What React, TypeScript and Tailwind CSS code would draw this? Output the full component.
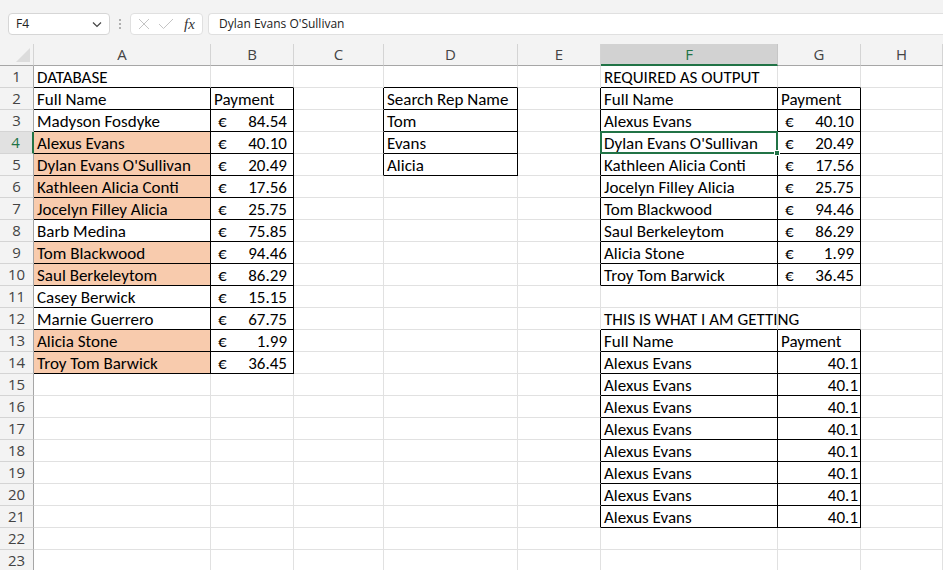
import React from 'react';

type Cell = { t: string; kind?: 'text' | 'eur' | 'num' };

const COLS = ['A', 'B', 'C', 'D', 'E', 'F', 'G', 'H'];
const ROWS = 23;

const database: [string, string][] = [
  ['Madyson Fosdyke', '84.54'],
  ['Alexus Evans', '40.10'],
  ['Dylan Evans O\'Sullivan', '20.49'],
  ['Kathleen Alicia Conti', '17.56'],
  ['Jocelyn Filley Alicia', '25.75'],
  ['Barb Medina', '75.85'],
  ['Tom Blackwood', '94.46'],
  ['Saul Berkeleytom', '86.29'],
  ['Casey Berwick', '15.15'],
  ['Marnie Guerrero', '67.75'],
  ['Alicia Stone', '1.99'],
  ['Troy Tom Barwick', '36.45'],
];

const required: [string, string][] = [
  ['Alexus Evans', '40.10'],
  ['Dylan Evans O\'Sullivan', '20.49'],
  ['Kathleen Alicia Conti', '17.56'],
  ['Jocelyn Filley Alicia', '25.75'],
  ['Tom Blackwood', '94.46'],
  ['Saul Berkeleytom', '86.29'],
  ['Alicia Stone', '1.99'],
  ['Troy Tom Barwick', '36.45'],
];

const highlighted = [4, 5, 6, 7, 9, 10, 13, 14];

// sheet contents, key = "row:col" (col 0 = A)
const sheet: Record<string, Cell> = {};
const put = (r: number, c: number, cell: Cell) => (sheet[`${r}:${c}`] = cell);

put(1, 0, { t: 'DATABASE' });
put(2, 0, { t: 'Full Name' });
put(2, 1, { t: 'Payment' });
database.forEach(([n, p], i) => {
  put(3 + i, 0, { t: n });
  put(3 + i, 1, { t: p, kind: 'eur' });
});

put(2, 3, { t: 'Search Rep Name' });
put(3, 3, { t: 'Tom' });
put(4, 3, { t: 'Evans' });
put(5, 3, { t: 'Alicia' });

put(1, 5, { t: 'REQUIRED AS OUTPUT' });
put(2, 5, { t: 'Full Name' });
put(2, 6, { t: 'Payment' });
required.forEach(([n, p], i) => {
  put(3 + i, 5, { t: n });
  put(3 + i, 6, { t: p, kind: 'eur' });
});

put(12, 5, { t: 'THIS IS WHAT I AM GETTING' });
put(13, 5, { t: 'Full Name' });
put(13, 6, { t: 'Payment' });
for (let r = 14; r <= 21; r++) {
  put(r, 5, { t: 'Alexus Evans' });
  put(r, 6, { t: '40.1', kind: 'num' });
}

const boxed = (r: number, c: number) =>
  (c >= 0 && c <= 1 && r >= 2 && r <= 14) ||
  (c === 3 && r >= 2 && r <= 5) ||
  (c >= 5 && c <= 6 && r >= 2 && r <= 10) ||
  (c >= 5 && c <= 6 && r >= 13 && r <= 21);

const cellFont = { fontFamily: 'Carlito, Calibri, Lato, "Liberation Sans", sans-serif' };

const FormulaBar: React.FC = () => (
  <div className="h-[44px] bg-[#f3f3f3] flex items-start pt-[13px] pl-[8px] gap-0">
    <div className="w-[102px] h-[22px] bg-white border border-[#d6d6d6] rounded-[4px] flex items-center justify-between pl-[7px] pr-[6px] text-[12px] text-[#222]">
      <span>F4</span>
      <svg width="12" height="12" viewBox="0 0 12 12" fill="none" stroke="#444" strokeWidth="1.2">
        <path d="M2 4.5 L6 8.5 L10 4.5" />
      </svg>
    </div>
    <div className="w-[20px] h-[22px] flex flex-col items-center justify-center gap-[2px]">
      <span className="w-[2px] h-[2px] bg-[#9a9a9a] rounded-full" />
      <span className="w-[2px] h-[2px] bg-[#9a9a9a] rounded-full" />
      <span className="w-[2px] h-[2px] bg-[#9a9a9a] rounded-full" />
    </div>
    <div className="w-[73px] h-[22px] bg-white border border-[#e0e0e0] rounded-[4px] flex items-center pl-[7px] gap-[8px]">
      <svg width="12" height="12" viewBox="0 0 12 12" fill="none" stroke="#c4c4c4" strokeWidth="1">
        <path d="M1 1 L11 11 M11 1 L1 11" />
      </svg>
      <svg width="16" height="12" viewBox="0 0 16 12" fill="none" stroke="#c4c4c4" strokeWidth="1">
        <path d="M1 6 L5.5 10.5 L15 1" />
      </svg>
      <span className="text-[15px] italic text-[#333] leading-none ml-[2px]" style={{ fontFamily: '"Liberation Serif", serif' }}>
        fx
      </span>
    </div>
    <div className="flex-1 ml-[5px] h-[22px] bg-white border border-[#e0e0e0] border-r-0 rounded-l-[4px] flex items-center pl-[10px] text-[12px] text-[#222]">
      Dylan Evans O'Sullivan
    </div>
  </div>
);

const App: React.FC = () => {
  return (
    <div className="w-[943px] h-[570px] overflow-hidden bg-white" style={{ fontFamily: '"Open Sans", "Noto Sans", sans-serif' }}>
      <FormulaBar />
      <div className="grid grid-cols-[34px_177px_83px_90px_134px_83px_177px_83px_1fr]">
        {/* column header row */}
        <div className="h-[22px] bg-[#f3f3f3] border-r border-b border-r-[#d4d4d4] border-b-[#a6a6a6] relative">
          <svg className="absolute right-[3px] bottom-[3px]" width="14" height="14" viewBox="0 0 14 14">
            <path d="M14 0 L14 14 L0 14 Z" fill="#dcdcdc" />
          </svg>
        </div>
        {COLS.map((c) =>
          c === 'F' ? (
            <div
              key={c}
              className="h-[22px] bg-[#d2d2d2] border-r border-r-[#c6c6c6] border-b-2 border-b-[#217346] flex items-center justify-center text-[15px] text-[#217346]"
            >
              {c}
            </div>
          ) : (
            <div
              key={c}
              className="h-[22px] bg-[#f3f3f3] border-r border-b border-r-[#d4d4d4] border-b-[#a6a6a6] flex items-center justify-center text-[15px] text-[#444]"
            >
              {c}
            </div>
          )
        )}

        {Array.from({ length: ROWS }, (_, i) => i + 1).map((r) => (
          <React.Fragment key={r}>
            {r === 4 ? (
              <div className="h-[22px] bg-[#e1e1e1] border-r-2 border-b border-r-[#217346] border-b-[#d4d4d4] flex items-center justify-center text-[15px] text-[#217346] pr-[1px]">
                {r}
              </div>
            ) : (
              <div className="h-[22px] bg-[#f3f3f3] border-r border-b border-r-[#a6a6a6] border-b-[#d4d4d4] flex items-center justify-center text-[15px] text-[#444]">
                {r}
              </div>
            )}
            {COLS.map((_, c) => {
              const cell = sheet[`${r}:${c}`];
              const rightBlack = boxed(r, c) || boxed(r, c + 1);
              const bottomBlack = boxed(r, c) || boxed(r + 1, c);
              const fill = c === 0 && highlighted.includes(r);
              const selected = r === 4 && c === 5;
              return (
                <div
                  key={c}
                  style={cellFont}
                  className={clsxLite(
                    'h-[22px] border-r border-b relative flex items-end text-[17px] leading-[18px] text-black whitespace-nowrap',
                    rightBlack ? 'border-r-black' : 'border-r-[#e1e1e1]',
                    bottomBlack ? 'border-b-black' : 'border-b-[#e1e1e1]',
                    fill ? 'bg-[#f8cbad]' : 'bg-white'
                  )}
                >
                  {cell && cell.kind === 'eur' && (
                    <div className="w-full flex justify-between pl-[7px] pr-[6px]">
                      <span>€</span>
                      <span>{cell.t}</span>
                    </div>
                  )}
                  {cell && cell.kind === 'num' && <div className="w-full text-right pr-[2px]">{cell.t}</div>}
                  {cell && !cell.kind && <span className="relative z-10 pl-[3px]">{cell.t}</span>}
                  {selected && (
                    <div className="absolute z-20 -left-[1px] -top-[1px] -right-[1px] -bottom-[1px] border-2 border-[#217346] pointer-events-none">
                      <div className="absolute -right-[4px] -bottom-[4px] w-[6px] h-[6px] bg-[#217346] border border-white" />
                    </div>
                  )}
                </div>
              );
            })}
          </React.Fragment>
        ))}
      </div>
    </div>
  );
};

function clsxLite(...parts: string[]) {
  return parts.join(' ');
}

export default App;
